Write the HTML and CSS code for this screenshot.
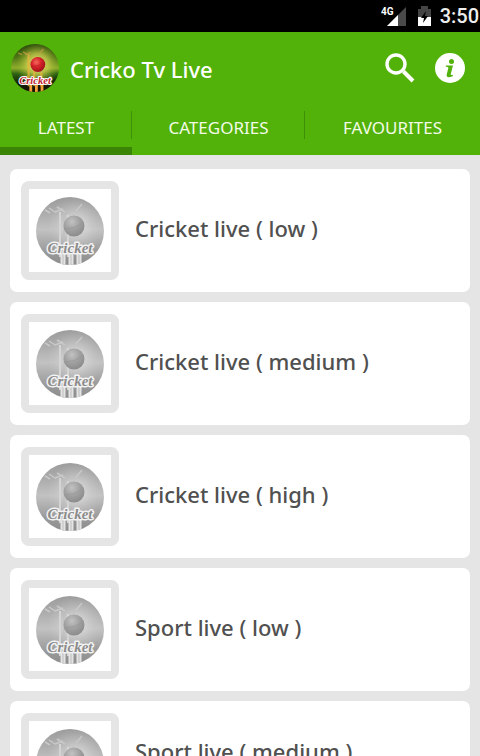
FILE: index.html
```html
<!DOCTYPE html>
<html lang="en">
<head>
<meta charset="utf-8">
<meta name="viewport" content="width=device-width, initial-scale=1">
<title>Cricko Tv Live</title>
<link rel="stylesheet" href="styles.css">
</head>
<body>
<svg class="defs" aria-hidden="true">
  <defs>
    <clipPath id="disc"><circle cx="34" cy="34" r="34"/></clipPath>
    <linearGradient id="sky" x1="0" y1="0" x2="0" y2="1">
      <stop offset="0" stop-color="#27450c"/><stop offset=".28" stop-color="#4f7614"/>
      <stop offset=".5" stop-color="#8fae2c"/><stop offset=".62" stop-color="#2f6412"/>
      <stop offset=".8" stop-color="#142408"/><stop offset="1" stop-color="#160c04"/>
    </linearGradient>
    <radialGradient id="glow" cx=".55" cy=".42" r=".45">
      <stop offset="0" stop-color="#f0e88a"/><stop offset=".5" stop-color="#cfd050" stop-opacity=".7"/>
      <stop offset="1" stop-color="#8fae2c" stop-opacity="0"/>
    </radialGradient>
    <radialGradient id="ball" cx=".4" cy=".35" r=".65">
      <stop offset="0" stop-color="#f4695c"/><stop offset=".5" stop-color="#d8232a"/><stop offset="1" stop-color="#a0141b"/>
    </radialGradient>
    <linearGradient id="sky-grey" x1="0" y1="0" x2="0" y2="1">
      <stop offset="0" stop-color="#9c9c9c"/><stop offset=".25" stop-color="#adadad"/>
      <stop offset=".48" stop-color="#c2c2c2"/><stop offset=".62" stop-color="#b0b0b0"/>
      <stop offset=".8" stop-color="#9b9b9b"/><stop offset="1" stop-color="#8c8c8c"/>
    </linearGradient>
    <radialGradient id="glow-grey" cx=".58" cy=".42" r=".42">
      <stop offset="0" stop-color="#e6e6e6"/><stop offset="1" stop-color="#c6c6c6" stop-opacity="0"/>
    </radialGradient>
    <radialGradient id="ball-grey" cx=".4" cy=".3" r=".7">
      <stop offset="0" stop-color="#c2c2c2"/><stop offset=".55" stop-color="#a0a0a0"/><stop offset="1" stop-color="#8c8c8c"/>
    </radialGradient>
    <symbol id="logo" viewBox="0 0 68 68">
      <g clip-path="url(#disc)">
        <rect width="68" height="68" fill="url(#sky)"/>
        <rect width="68" height="68" fill="url(#glow)"/>
        <path d="M10 13l6 2M17 11l7 4M40 14l6-7M20 15l8-3" stroke="#c9a04a" stroke-width="2" opacity=".7"/>
        <path d="M25 15v45M33 18v42M43 40v20" stroke="#e9b53d" stroke-width="3" opacity=".75"/>
        <path d="M28 56v12M36 56v12M44 56v12" stroke="#f5a03c" stroke-width="4"/>
        <circle cx="38" cy="29" r="10.500" fill="url(#ball)"/>
        <path d="M29 32q10 0 18-6" fill="none" stroke="#b01a20" stroke-width=".7"/>
        <text class="logo-word logo-word-red" x="34" y="56" text-anchor="middle">Cricket</text>
      </g>
    </symbol>
    <symbol id="logo-grey" viewBox="0 0 68 68">
      <g clip-path="url(#disc)">
        <rect width="68" height="68" fill="url(#sky-grey)"/>
        <rect width="68" height="68" fill="url(#glow-grey)"/>
        <path d="M9 13l5 3M13 11l6 4M21 10l8 5M40 14l6-7M19 15l8-3" stroke="#c8c8c8" stroke-width="1.500"/>
        <path d="M24 15v45M32 18v42" stroke="#d4d4d4" stroke-width="2"/>
        <path d="M28 16v42" stroke="#bcbcbc"/>
        <path d="M27 56v12M35 56v12M43 56v12" stroke="#e4e4e4" stroke-width="5"/>
        <path d="M27 56v12M35 56v12M43 56v12" stroke="#bdbdbd"/>
        <circle cx="38" cy="29" r="10.500" fill="url(#ball-grey)"/>
        <path d="M29 32q10 0 18-6" fill="none" stroke="#969696" stroke-width=".7"/>
        <text class="logo-word logo-word-grey" x="34" y="56" text-anchor="middle">Cricket</text>
      </g>
    </symbol>
  </defs>
</svg>

<div class="status">
  <svg class="signal" viewBox="0 0 25 21" role="img" aria-label="4G signal">
    <path d="M25 1v19H6z" fill="#4a4a4a"/>
    <path d="M17 9v11H6z" fill="#fff"/>
    <text class="signal-text" x="0" y="9">4G</text>
  </svg>
  <svg class="battery" viewBox="0 0 13 20" role="img" aria-label="Charging">
    <path d="M0 3h3V0h7v3h3v8H0z" fill="#454545"/>
    <path d="M0 11h13v9H0z" fill="#fff"/>
    <path d="M8 5L3 12h3l-1 5 5-7H7z" fill="#000"/>
  </svg>
  <time class="clock">3:50</time>
</div>

<header class="header">
  <div class="bar">
    <svg class="brand" aria-hidden="true"><use href="#logo"/></svg>
    <h1 class="title">Cricko Tv Live</h1>
    <button class="action" type="button" aria-label="Search">
      <svg viewBox="0 0 30 30"><circle cx="11" cy="11" r="9" fill="none" stroke="#fff" stroke-width="3.400"/><path d="M18.500 18.500L28 28" stroke="#fff" stroke-width="4"/></svg>
    </button>
    <button class="action" type="button" aria-label="Information">
      <svg viewBox="0 0 30 30"><circle cx="15" cy="15" r="15" fill="#fff"/><circle cx="16.500" cy="8.500" r="2.500" fill="#52b20a"/><path d="M11 12.500h7l-2.300 8.700q-.2 1.300 2.300.5l-.3 1.500q-6.700 2.500-6-1.700l1.700-6.700q.2-1-2.700-1z" fill="#52b20a"/></svg>
    </button>
  </div>
  <nav class="tabs">
    <a class="tab tab-active" href="#latest" aria-current="page">LATEST</a>
    <a class="tab" href="#categories">CATEGORIES</a>
    <a class="tab" href="#favourites">FAVOURITES</a>
  </nav>
</header>

<main class="list" id="latest">
  <a class="card" href="#cricket-low"><span class="thumb"><svg aria-hidden="true"><use href="#logo-grey"/></svg></span><span class="name">Cricket live ( low )</span></a>
  <a class="card" href="#cricket-medium"><span class="thumb"><svg aria-hidden="true"><use href="#logo-grey"/></svg></span><span class="name">Cricket live ( medium )</span></a>
  <a class="card" href="#cricket-high"><span class="thumb"><svg aria-hidden="true"><use href="#logo-grey"/></svg></span><span class="name">Cricket live ( high )</span></a>
  <a class="card" href="#sport-low"><span class="thumb"><svg aria-hidden="true"><use href="#logo-grey"/></svg></span><span class="name">Sport live ( low )</span></a>
  <a class="card card-raised" href="#sport-medium"><span class="thumb"><svg aria-hidden="true"><use href="#logo-grey"/></svg></span><span class="name">Sport live ( medium )</span></a>
</main>
</body>
</html>
```
FILE: styles.css
```css
* { box-sizing: border-box; }

body {
  margin: 0;
  background: #e5e5e5;
  font-family: "Noto Sans", "Open Sans", sans-serif;
}

.defs { position: absolute; width: 0; height: 0; }

.logo-word {
  font: italic 700 15px "Liberation Serif", serif;
  paint-order: stroke;
  stroke-width: 3px;
  stroke-linejoin: round;
}
.logo-word-red { fill: #c0202c; stroke: #fff; }
.logo-word-grey { fill: #8c8c8c; stroke: #f2f2f2; }

.status {
  display: flex;
  justify-content: flex-end;
  align-items: center;
  height: 32px;
  padding-right: 1px;
  background: #000;
  color: #eee;
}
.signal { width: 25px; height: 21px; }
.signal-text { font: 700 10px Roboto, sans-serif; fill: #fff; }
.battery { width: 13px; height: 20px; margin: 0 9px 0 12px; }
.clock { font: 500 20px/32px Roboto, sans-serif; }

.header { background: #52b20a; color: #fff; }
.bar {
  display: flex;
  align-items: center;
  height: 71px;
  padding: 0 15px 0 11px;
}
.brand { width: 48px; height: 48px; }
.title {
  flex: 1;
  margin: 0 0 0 11px;
  padding-top: 2px;
  font-size: 22px;
  font-weight: 500;
  line-height: 32px;
}
.action {
  width: 30px;
  height: 30px;
  margin-left: 20px;
  padding: 0;
  border: 0;
  background: none;
}
.action svg { display: block; width: 30px; height: 30px; }

.tabs { display: grid; grid-template-columns: 132fr 173fr 175fr; }
.tab {
  display: flex;
  align-items: center;
  justify-content: center;
  height: 52px;
  padding-top: 4px;
  border-bottom: 8px solid transparent;
  color: #f3fbe8;
  font-size: 17px;
  text-decoration: none;
  background: linear-gradient(#3f9008, #3f9008) right 8px / 1px 28px no-repeat;
}
.tab:last-child { background: none; }
.tab-active { border-bottom-color: #3b8506; }

.list {
  display: grid;
  gap: 10px;
  padding: 14px 10px;
}
.card {
  display: flex;
  align-items: center;
  gap: 16px;
  padding: 12px 11px;
  border-radius: 7px;
  background: #fff;
  color: #505050;
  text-decoration: none;
}
.thumb {
  display: grid;
  place-items: center;
  width: 98px;
  height: 99px;
  border: 8px solid #e5e5e5;
  border-radius: 8px;
}
.thumb svg { width: 68px; height: 68px; }
.name {
  padding-bottom: 6px;
  font-size: 22px;
  font-weight: 500;
  line-height: 30px;
}
.card-raised .name { padding-bottom: 24px; }
```
